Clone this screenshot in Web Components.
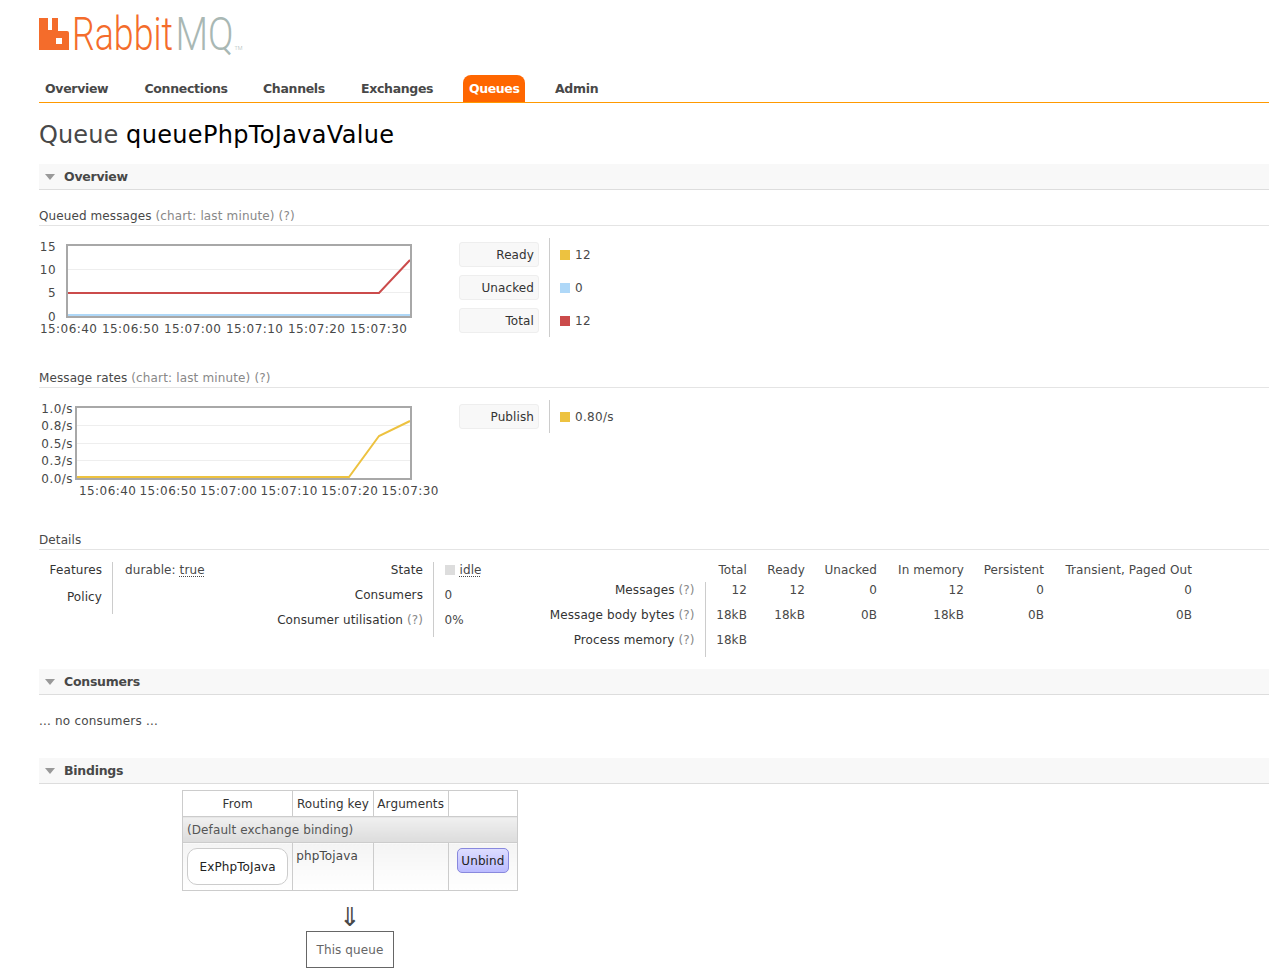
<!DOCTYPE html>
<html lang="en"><head><meta charset="utf-8"><title>RabbitMQ Management</title>
<style>
html,body{margin:0;padding:0;background:#fff;overflow:hidden}
body{font:12px/14px "DejaVu Sans",Verdana,sans-serif;color:#484848;letter-spacing:.1px}
</style></head>
<body>
<rmq-page>
  <rmq-header></rmq-header>
  <rmq-title>queuePhpToJavaValue</rmq-title>
  <rmq-section name="Overview" style="--body-h:479px">
    <rmq-sub label="Queued messages" hint="(chart: last minute) (?)"></rmq-sub>
    <rmq-chart-row style="--top:18px;--bottom:15px">
      <rmq-chart ylabels="15,10,5,0" ylabel-w="17" canvas-gap="10" canvas-w="346" xlabels="15:06:40,15:06:50,15:07:00,15:07:10,15:07:20,15:07:30" xstart="1" xstep="62"
        grids="25,48" paths="#edc240|2,71 313,71;#afd8f8|2,71 344,71;#cb4b4b|2,49 313,49 344,16"></rmq-chart>
      <rmq-legend style="--ml:47px" items="Ready|#edc240|12;Unacked|#afd8f8|0;Total|#cb4b4b|12"></rmq-legend>
    </rmq-chart-row>
    <rmq-sub label="Message rates" hint="(chart: last minute) (?)"></rmq-sub>
    <rmq-chart-row style="--top:18px;--bottom:16px">
      <rmq-chart ylabels="1.0/s,0.8/s,0.5/s,0.3/s,0.0/s" ylabel-w="34" canvas-gap="2" canvas-w="337" xlabels="15:06:40,15:06:50,15:07:00,15:07:10,15:07:20,15:07:30" xstart="40" xstep="60.5"
        grids="19,37,54" paths="#edc240|2,71 274,71 304,30 335,15"></rmq-chart>
      <rmq-legend style="--ml:47px" items="Publish|#edc240|0.80/s"></rmq-legend>
    </rmq-chart-row>
    <rmq-sub label="Details"></rmq-sub>
    <rmq-details></rmq-details>
  </rmq-section>
  <rmq-section name="Consumers" style="--body-h:63px">
    <rmq-plain>... no consumers ...</rmq-plain>
  </rmq-section>
  <rmq-section name="Bindings">
    <rmq-bindings></rmq-bindings>
  </rmq-section>
</rmq-page>
<script>
const def=(name,css,html,after)=>{
  customElements.define(name,class extends HTMLElement{
    constructor(){super();this.attachShadow({mode:'open'});}
    connectedCallback(){
      const h=typeof html==='function'?html(this):html;
      this.shadowRoot.innerHTML=`<style>${css}</style>${h}`;
      if(after)after(this.shadowRoot);
    }
  });
};
def('rmq-page',`:host{display:block;padding-left:39px}`,`<slot></slot>`);

def('rmq-header',`:host{display:block}
.logo{display:block;height:75px}
nav{display:flex;height:27px;border-bottom:1px solid #f90;align-items:stretch;padding-left:6px}
a{font-weight:700;font-size:12.5px;line-height:27px;color:#484848;letter-spacing:-.32px;white-space:nowrap}
a.on{background:#f60;color:#fff;border-radius:8px 8px 0 0;padding:0 6px;width:50px;text-align:center;letter-spacing:-.4px}
text{font-family:"Roboto","Liberation Sans",sans-serif;font-weight:300;letter-spacing:0}`,
`<svg class="logo" width="230" height="75" viewBox="0 0 230 75" role="img" aria-label="RabbitMQ">
  <path fill="#f46c2b" fill-rule="evenodd" d="M0 18h9v12h4V18h6v13h9a2 2 0 0 1 2 2V50H0zM17 38v6h6v-6z"/>
  <text data-x="33" data-y="50" data-w="101" font-size="47" fill="#f46c2b">Rabbit</text>
  <text data-x="136.500" data-y="50" data-w="58" font-size="47" fill="#a9b8b4">MQ</text>
  <text data-x="195.500" data-y="49.500" data-w="8" font-size="6" fill="#a9b8b4">TM</text>
</svg>
<nav>
  <a style="width:99.500px">Overview</a><a style="width:118.500px">Connections</a><a style="width:98px">Channels</a><a style="width:102px">Exchanges</a><a class="on">Queues</a><a style="margin-left:30px">Admin</a>
</nav>`,
root=>root.querySelectorAll('text').forEach(t=>{
  const sx=+t.dataset.w/t.getComputedTextLength();
  t.setAttribute('transform',`translate(${t.dataset.x} ${t.dataset.y}) scale(${sx} 1)`);
}));

def('rmq-title',`:host{display:block;font-size:24px;line-height:30px;padding-top:17px;height:44px;color:#484848;letter-spacing:.1px}
b{font-weight:400;color:#000;letter-spacing:.33px}`,`Queue <b><slot></slot></b>`);

def('rmq-section',`:host{display:block}
.h{height:25px;background:#f8f8f8;border-bottom:1px solid #ddd;display:flex;align-items:center;font-weight:700;font-size:12.5px;letter-spacing:-.25px;padding-left:6px}
.t{width:0;height:0;border:5.500px solid transparent;border-top:6px solid #999;border-bottom:0;margin-right:9px}
.b{height:var(--body-h,auto)}`,
el=>`<div class="h"><span class="t"></span>${el.getAttribute('name')}</div><div class="b"><slot></slot></div>`);

def('rmq-sub',`:host{display:block;height:25px;padding-top:10px;border-bottom:1px solid #e4e4e4;line-height:32px}
span{color:#888;letter-spacing:.15px}`,
el=>`${el.getAttribute('label')} ${el.hasAttribute('hint')?`<span>${el.getAttribute('hint')}</span>`:''}`);

def('rmq-chart-row',`:host{display:flex;align-items:flex-start;padding-top:var(--top);padding-bottom:var(--bottom)}`,`<slot></slot>`);

def('rmq-chart',`:host{display:block;flex:none}
.top{display:flex;align-items:stretch;height:74px}
.y{display:flex;flex-direction:column;justify-content:space-between;align-items:flex-end;margin:-4px 0 -5.600px 0;letter-spacing:.45px}
svg{display:block;flex:none}
.x{display:flex;width:0;margin-top:4px;letter-spacing:.42px;white-space:nowrap}
.x span{flex:none}`,
el=>{
  const a=n=>el.getAttribute(n),W=+a('canvas-w'),yl=a('ylabels').split(','),xl=a('xlabels').split(',');
  const grids=a('grids').split(',').map(g=>`<line x1="2" x2="${W-2}" y1="${+g+.5}" y2="${+g+.5}" stroke="#eee"/>`).join('');
  const paths=a('paths').split(';').map(p=>{const[c,d]=p.split('|');return `<polyline fill="none" stroke="${c}" stroke-width="2" points="${d}"/>`}).join('');
  return `<div class="top"><div class="y" style="width:${a('ylabel-w')}px">${yl.map(t=>`<span>${t}</span>`).join('')}</div>
  <svg style="margin-left:${a('canvas-gap')}px" width="${W}" height="74" viewBox="0 0 ${W} 74">${grids}${paths}<rect x="1" y="1" width="${W-2}" height="72" fill="none" stroke="#a8a8a8" stroke-width="2"/></svg></div>
  <div class="x" style="padding-left:${a('xstart')}px">${xl.map(t=>`<span style="width:${a('xstep')}px">${t}</span>`).join('')}</div>`;
});

def('rmq-legend',`:host{display:flex;flex:none;margin-left:var(--ml);margin-top:-6px}
.l{display:flex;flex-direction:column;gap:8px;padding:4px 10px 4px 0;border-right:1px solid #ccc}
.l span{display:block;width:80px;height:25px;box-sizing:border-box;background:#f8f8f8;border:1px solid #eee;border-radius:3px;text-align:right;padding-right:4px;line-height:25px;color:#333}
.v{display:flex;flex-direction:column;gap:8px;padding:4px 0 4px 10px;letter-spacing:.3px}
.v div{height:25px;display:flex;align-items:center}
i{width:10px;height:10px;margin-right:5px}`,
el=>{
  const it=el.getAttribute('items').split(';').map(s=>s.split('|'));
  return `<div class="l">${it.map(i=>`<span>${i[0]}</span>`).join('')}</div>
  <div class="v">${it.map(i=>`<div><i style="background:${i[1]}"></i>${i[2]}</div>`).join('')}</div>`;
});

def('rmq-details',`:host{display:flex;align-items:flex-start;padding-top:12px}
.g{display:grid;flex:none}
.g>div{white-space:nowrap;box-sizing:border-box;padding-top:1px}
.th{text-align:right;color:#333;padding-right:10px}
.td{border-left:1px solid #ccc}
.q{color:#888}
u{text-decoration:underline dotted #484848;text-underline-offset:2px}
.a{grid-template-columns:73px 57px;grid-template-rows:25px 27px}
.a .low{padding-top:3px}
.a .td{padding-left:12px}
.b{grid-template-columns:264px 111px;grid-template-rows:25px 25px 25px}
.b .td{padding-left:10.500px}
.sq{display:inline-block;width:10px;height:10px;background:#ddd;margin-right:5px;vertical-align:-1px}
.m{display:grid;flex:none;grid-template-columns:162px 41px 58px 72px 87px 80px 148px;grid-template-rows:20px 25px 25px 25px}
.m>div{text-align:right;white-space:nowrap;box-sizing:border-box;padding-top:1px}
.m .lab{padding-right:10.500px;color:#333;border-right:1px solid #ccc}
.m .nb{border-right:0}`,
`<div class="g a">
  <div class="th">Features</div><div class="td">durable: <u>true</u></div>
  <div class="th low">Policy</div><div class="td"></div>
</div>
<div class="g b">
  <div class="th">State</div><div class="td"><span class="sq"></span><u>idle</u></div>
  <div class="th">Consumers</div><div class="td">0</div>
  <div class="th">Consumer utilisation <span class="q">(?)</span></div><div class="td">0%</div>
</div>
<div class="m">
  <div class="lab nb"></div><div>Total</div><div>Ready</div><div>Unacked</div><div>In memory</div><div>Persistent</div><div>Transient, Paged Out</div>
  <div class="lab">Messages <span class="q">(?)</span></div><div>12</div><div>12</div><div>0</div><div>12</div><div>0</div><div>0</div>
  <div class="lab">Message body bytes <span class="q">(?)</span></div><div>18kB</div><div>18kB</div><div>0B</div><div>18kB</div><div>0B</div><div>0B</div>
  <div class="lab">Process memory <span class="q">(?)</span></div><div>18kB</div><div></div><div></div><div></div><div></div><div></div>
</div>`);

def('rmq-plain',`:host{display:block;padding-top:19px;letter-spacing:.2px}`,`<slot></slot>`);

def('rmq-bindings',`:host{display:block;padding:6px 0 0 143px}
table{border-collapse:collapse;width:336px;table-layout:fixed}
td,th{border:1px solid #ccc;padding:0;font-weight:400;vertical-align:top}
th{height:25px;box-sizing:border-box;padding-top:2px;line-height:23px;text-align:center;color:#333;white-space:nowrap}
.g td{height:25px;box-sizing:border-box;padding-top:2px;line-height:23px;padding-left:4px;background:linear-gradient(#f0f0f0,#dcdcdc);color:#555}
.r td{height:47px;background:linear-gradient(#f4f4f4,#fff)}
.k{padding:6px 3px;line-height:14px;box-sizing:border-box}
.x{display:block;margin:5px 4px 0;height:37px;line-height:37px;box-sizing:border-box;border:1px solid #ccc;border-radius:10px;background:#fff;text-align:center;color:#222}
.ub{display:block;margin:5px 8px 0;height:25px;line-height:25px;box-sizing:border-box;text-align:center;border:1px solid #88d;border-radius:5px;background:linear-gradient(#ddf,#bbf);color:#222}
.down{text-align:center;width:336px;font-size:26px;line-height:26px;margin-top:13px;height:27px;color:#484848}
.q{box-sizing:border-box;width:88px;height:37px;border:1px solid #666;line-height:37px;text-align:center;margin-left:124px;color:#666}`,
`<table><colgroup><col style="width:110px"><col style="width:80px"><col style="width:75px"><col style="width:69px"></colgroup>
<tr><th>From</th><th>Routing key</th><th>Arguments</th><th></th></tr>
<tr class="g"><td colspan="4">(Default exchange binding)</td></tr>
<tr class="r"><td><span class="x">ExPhpToJava</span></td><td class="k">phpTojava</td><td></td><td><span class="ub">Unbind</span></td></tr></table>
<div class="down">⇓</div><div class="q">This queue</div>`);
</script>
</body></html>
